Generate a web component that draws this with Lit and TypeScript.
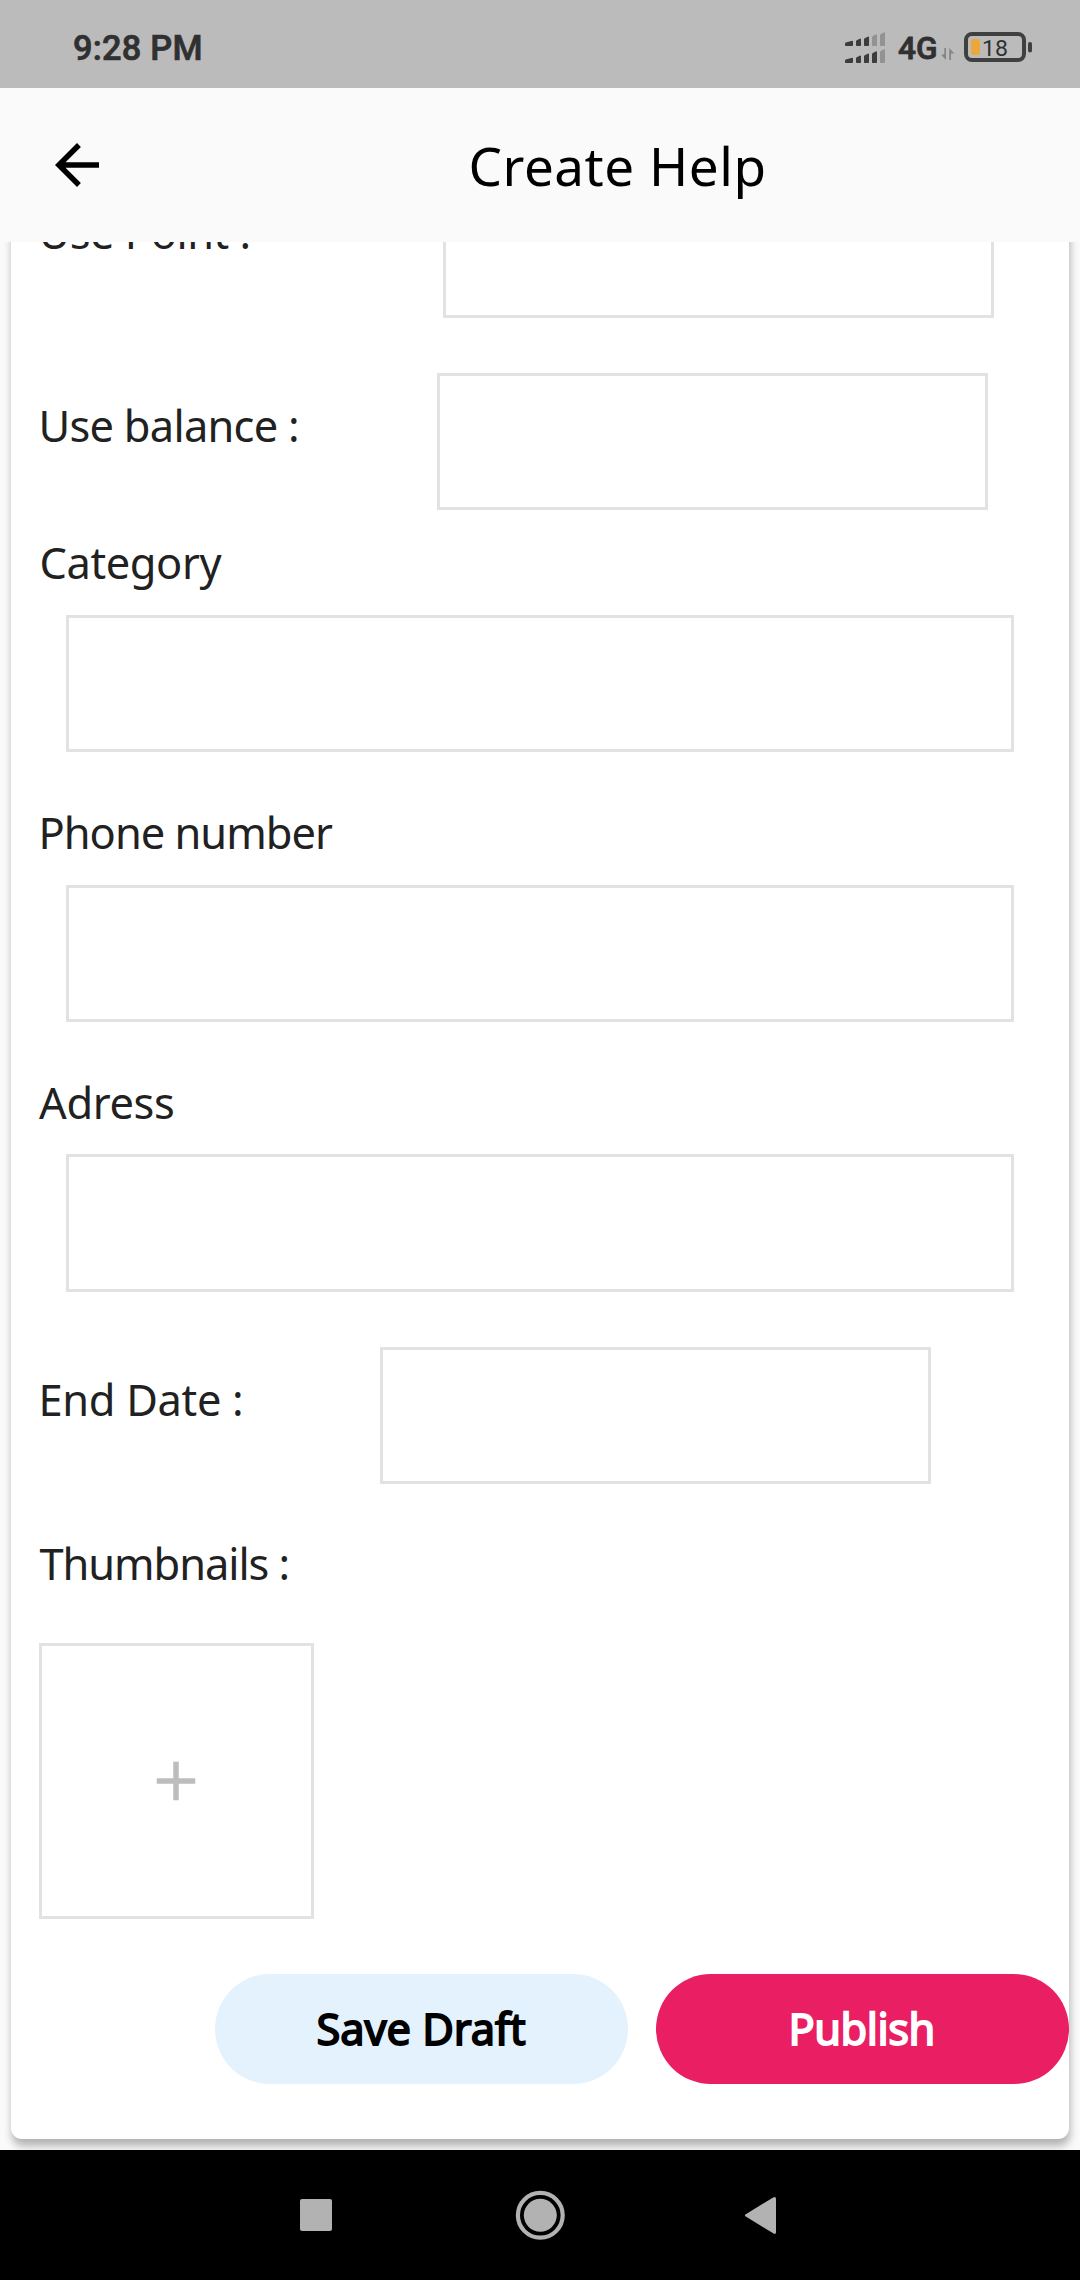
import { LitElement, html, css, svg } from "lit";
import { customElement, property } from "lit/decorators.js";

/** A single line of text whose visible glyphs start at `inset` and span `ink` pixels. */
@customElement("fit-text")
class FitText extends LitElement {
  static styles = css`
    :host {
      display: block;
      white-space: pre;
    }
  `;
  @property() text = "";
  @property({ type: Number }) ink = 0;
  @property({ type: Number }) inset = 0;

  updated() {
    const cs = getComputedStyle(this);
    const ctx = document.createElement("canvas").getContext("2d")!;
    ctx.font = `${cs.fontWeight} ${cs.fontSize} ${cs.fontFamily}`;
    const m = ctx.measureText(this.text);
    const natural = m.actualBoundingBoxRight + m.actualBoundingBoxLeft;
    this.style.letterSpacing = `${((this.ink - natural) / (this.text.length - 1)).toFixed(3)}px`;
    this.style.textIndent = `${(this.inset + m.actualBoundingBoxLeft).toFixed(2)}px`;
  }

  render() {
    return html`${this.text}`;
  }
}

@customElement("status-bar")
class StatusBar extends LitElement {
  static styles = css`
    :host {
      display: flex;
      justify-content: space-between;
      height: 88px;
      background: #bbbbbb;
      color: #303030;
      font-family: Roboto, sans-serif;
    }
    .time {
      font-size: 34.4px;
      font-weight: 500;
      line-height: 40px;
      padding-top: 28px;
      -webkit-text-stroke: 0.7px currentColor;
    }
    .icons {
      display: block;
      width: 240px;
      height: 88px;
    }
    .net {
      font: 500 32px Roboto, sans-serif;
      stroke: #303030;
      stroke-width: 0.8px;
    }
    .level {
      font: 400 22.5px Roboto, sans-serif;
    }
  `;

  bars(base: number, tops: number[], lit: number) {
    const xs = [845, 856, 864, 872, 880];
    return xs.map((x, i) => {
      const w = i === 0 ? 8 : 5;
      const top = base - tops[i];
      return svg`<path d="M${x + 0.7} ${top + 1.8}L${x + w - 0.7} ${top}Q${x + w} ${top} ${x + w} ${top + 0.8}V${base - 0.8}Q${x + w} ${base} ${x + w - 0.8} ${base}H${x + 0.8}Q${x} ${base} ${x} ${base - 0.8}V${top + 2.6}Z" fill=${i < lit ? "#3c3c3c" : "#929292"} />`;
    });
  }

  render() {
    return html`
      <fit-text class="time" text="9:28 PM" ink="126.5" inset="74"></fit-text>
      <svg class="icons" viewBox="840 0 240 88">
        ${this.bars(46, [5.3, 7.6, 9.6, 11.8, 13.8], 3)}
        ${this.bars(63, [5.3, 7.6, 9.6, 11.8, 13.8], 4)}
        <text class="net" x="898" y="59.2" textLength="39.5" lengthAdjust="spacingAndGlyphs" fill="#303030">4G</text>
        <path d="M946 48v12l-5-5.4h3.3V48zM949.3 60V48l5 5.4h-3.3V60z" fill="#848484" />
        <rect x="966" y="34" width="58" height="26" rx="6" fill="none" stroke="#404040" stroke-width="4" />
        <rect x="971" y="39" width="9" height="16" rx="2.5" fill="#eaa83c" />
        <rect x="1028" y="42" width="4" height="10.5" rx="1.8" fill="#404040" />
        <text class="level" x="982" y="56" textLength="26" lengthAdjust="spacingAndGlyphs" fill="#303030">18</text>
      </svg>
    `;
  }
}

@customElement("app-root")
class AppRoot extends LitElement {
  static styles = css`
    :host {
      display: flex;
      flex-direction: column;
      width: 1080px;
      height: 2280px;
      overflow: hidden;
      background: #fafafa;
      font-family: "Noto Sans", "Open Sans", sans-serif;
      color: #212121;
    }
    status-bar {
      flex: none;
    }
    .appbar {
      flex: none;
      height: 154px;
      display: flex;
      align-items: center;
      padding-left: 44px;
      box-sizing: border-box;
      color: #000;
    }
    .back {
      width: 66px;
      height: 66px;
      flex: none;
    }
    .title {
      font-size: 53px;
      line-height: 70px;
      padding-top: 2px;
    }
    .view {
      flex: none;
      height: 1908px;
      box-sizing: border-box;
      padding: 0 11px 11px;
      display: flex;
      flex-direction: column;
      justify-content: flex-end;
      overflow: hidden;
    }
    .card {
      flex: none;
      background: #fff;
      border-radius: 11px;
      box-shadow: 1px 7px 9px rgba(0, 0, 0, 0.29);
      padding: 55px 0 55.5px 27.5px;
      display: flex;
      flex-direction: column;
    }
    .label {
      font-size: 43.4px;
      line-height: 52px;
      height: 50px;
    }
    .box {
      box-sizing: border-box;
      border: 3px solid #e2e2e2;
      height: 137.5px;
      flex: none;
    }
    .row {
      display: flex;
      margin-bottom: 55px;
    }
    .row .label {
      flex: none;
      padding-top: 27px;
    }
    .row .box {
      width: 551px;
    }
    .point .label {
      width: 404.5px;
    }
    .balance {
      margin-bottom: 27px;
    }
    .balance .label {
      width: 398.5px;
    }
    .date {
      margin-bottom: 54px;
    }
    .date .label {
      width: 341.2px;
    }
    .field {
      display: flex;
      flex-direction: column;
      gap: 27.5px;
      margin-bottom: 54.7px;
    }
    .field .box {
      margin-left: 27.5px;
      width: 947.5px;
    }
    .thumb {
      box-sizing: border-box;
      width: 275.5px;
      height: 275.5px;
      border: 3px solid #e2e2e2;
      margin: 55px 0;
      display: flex;
      align-items: center;
      justify-content: center;
    }
    .plus {
      width: 66px;
      height: 66px;
    }
    .actions {
      display: flex;
      justify-content: flex-end;
      gap: 28px;
    }
    .btn {
      width: 413px;
      height: 110px;
      border-radius: 55px;
      font-size: 43.4px;
      line-height: 60px;
      padding-top: 25px;
      box-sizing: border-box;
      -webkit-text-stroke: 1.8px currentColor;
    }
    .save {
      background: #e3f2fd;
      color: #000;
    }
    .publish {
      background: #e91e63;
      color: #fff;
    }
    .nav {
      flex: none;
      display: block;
      width: 1080px;
      height: 130px;
      background: #000;
    }
  `;

  field(text: string, ink: number, inset: number) {
    return html`<div class="field">
      <fit-text class="label" text=${text} ink=${ink} inset=${inset}></fit-text>
      <div class="box"></div>
    </div>`;
  }

  row(name: string, text: string, ink: number, inset: number) {
    return html`<div class="row ${name}">
      <fit-text class="label" text=${text} ink=${ink} inset=${inset}></fit-text>
      <div class="box"></div>
    </div>`;
  }

  render() {
    return html`
      <status-bar></status-bar>
      <div class="appbar">
        <svg class="back" viewBox="0 0 24 24">
          <path d="M20 11H7.83l5.59-5.59L12 4l-8 8 8 8 1.41-1.41L7.83 13H20v-2z" />
        </svg>
        <fit-text class="title" text="Create Help" ink="292" inset="361.5"></fit-text>
      </div>
      <div class="view">
        <div class="card">
          ${this.row("point", "Use Point :", 207, 3)}
          ${this.row("balance", "Use balance :", 255.5, 3)}
          ${this.field("Category", 181, 3)}
          ${this.field("Phone number", 290.5, 4)}
          ${this.field("Adress", 134, 0.5)}
          ${this.row("date", "End Date :", 198.5, 4)}
          <fit-text class="label" text="Thumbnails :" ink="248" inset="1"></fit-text>
          <div class="thumb">
            <svg class="plus" viewBox="0 0 24 24">
              <path d="M19 13h-6v6h-2v-6H5v-2h6V5h2v6h6v2z" fill="#bdbdbd" />
            </svg>
          </div>
          <div class="actions">
            <fit-text class="btn save" text="Save Draft" ink="206.5" inset="103.5"></fit-text>
            <fit-text class="btn publish" text="Publish" ink="140" inset="136.5"></fit-text>
          </div>
        </div>
      </div>
      <svg class="nav" viewBox="0 0 1080 130">
        <g fill="#b2b2b2">
          <rect x="300" y="49" width="32" height="32" rx="2" />
          <circle cx="540.3" cy="65.3" r="16.5" />
          <circle cx="540.3" cy="65.3" r="22.4" fill="none" stroke="#b2b2b2" stroke-width="4.2" />
          <path d="M745.8 64.2L773.2 47.4Q776 46 776 49V82Q776 85 773.2 83.2L745.8 66.6Q744 65.4 745.8 64.2Z" />
        </g>
      </svg>
    `;
  }
}
